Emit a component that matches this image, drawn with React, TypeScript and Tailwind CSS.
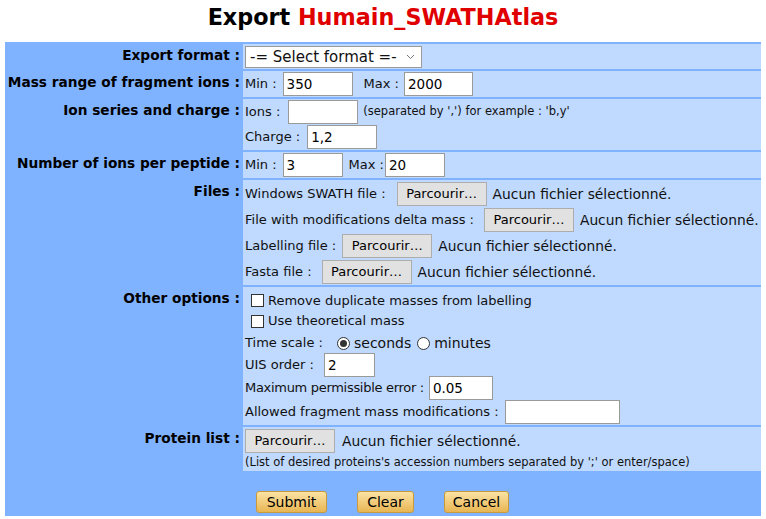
import React from 'react';

const cell = 'bg-[#bfd9ff] px-[2px]';
const label = 'pt-[1px] pr-[1px] text-right font-bold leading-[20px] text-[13.7px] text-black whitespace-nowrap';

function TextBox({ w, value = '' }: { w: string; value?: string }) {
    return (
        <input
            readOnly
            value={value}
            className={`${w} h-[24px] border border-[#9a9a9a] bg-white px-[3px] text-[13.5px] text-black outline-none font-['DejaVu_Sans',Verdana,sans-serif]`}
        />
    );
}

function Browse({ w = 'w-[90px]' }: { w?: string }) {
    return (
        <button className={`${w} h-[24px] border border-[#adadad] bg-[#e1e1e1] text-[13px] text-black font-['DejaVu_Sans',Verdana,sans-serif]`}>
            Parcourir…
        </button>
    );
}

function FileLine({ text, gap }: { text: string; gap: string }) {
    return (
        <div className="flex h-[26px] items-center whitespace-nowrap">
            <span className={gap}>{text}</span>
            <Browse />
            <span className="ml-[6px] text-[13.8px]">Aucun fichier sélectionné.</span>
        </div>
    );
}

function Check({ text }: { text: string }) {
    return (
        <div className="flex items-center">
            <span className="ml-[6px] mr-[4px] inline-block h-[13px] w-[13px] border border-[#333] bg-white" />
            <span>{text}</span>
        </div>
    );
}

function Radio({ on }: { on?: boolean }) {
    return (
        <span className="inline-flex h-[13px] w-[13px] items-center justify-center rounded-full border border-[#333] bg-white">
            {on && <span className="h-[7px] w-[7px] rounded-full bg-[#333]" />}
        </span>
    );
}

function GoldButton({ text, w }: { text: string; w: string }) {
    return (
        <button className={`${w} h-[22px] rounded-[3px] border border-[#c99a3c] bg-gradient-to-b from-[#fbe3a3] to-[#e8b551] text-[14px] leading-[20px] text-black`}>
            {text}
        </button>
    );
}

export default function App() {
    return (
        <div className="w-[766px] h-[519px] bg-white font-['DejaVu_Sans',Verdana,sans-serif] text-[13px] text-[#111]">
            <div className="flex h-[42px] items-center justify-center pb-[6px] text-[22.3px] font-bold">
                <span className="text-black">Export&nbsp;</span>
                <span className="text-[#e00000]">Humain_SWATHAtlas</span>
            </div>

            <div className="mx-[5px] grid w-[756px] grid-cols-[234px_1fr] gap-[2px] bg-[#80b3ff] p-[2px]">
                {/* export format */}
                <div className={label}>Export format :</div>
                <div className={`${cell} flex h-[25px] items-center`}>
                    <div className="flex h-[22px] w-[177px] items-center justify-between border border-[#9a9a9a] bg-white pl-[4px] pr-[6px]">
                        <span className="text-[15px] leading-[20px]">-= Select format =-</span>
                        <svg width="9" height="6" viewBox="0 0 9 6" className="mt-[1px]">
                            <polyline points="1,1 4.5,4.5 8,1" fill="none" stroke="#777" strokeWidth="1" />
                        </svg>
                    </div>
                </div>

                {/* mass range */}
                <div className={label}>Mass range of fragment ions :</div>
                <div className={`${cell} flex h-[26px] items-center`}>
                    <span className="mr-[6px]">Min :</span>
                    <TextBox w="w-[70px]" value="350" />
                    <span className="ml-[11px] mr-[5px]">Max :</span>
                    <TextBox w="w-[69px]" value="2000" />
                </div>

                {/* ion series */}
                <div className={label}>Ion series and charge :</div>
                <div className={`${cell} flex flex-col py-[1px]`}>
                    <div className="flex h-[24px] items-center">
                        <span className="mr-[8px]">Ions :</span>
                        <TextBox w="w-[70px]" />
                        <span className="ml-[5px] text-[11.5px]">(separated by ',') for example : 'b,y'</span>
                    </div>
                    <div className="mt-[1px] flex h-[24px] items-center">
                        <span className="mr-[7px]">Charge :</span>
                        <TextBox w="w-[70px]" value="1,2" />
                    </div>
                </div>

                {/* ions per peptide */}
                <div className={label}>Number of ions per peptide :</div>
                <div className={`${cell} flex h-[26px] items-center`}>
                    <span className="mr-[6px]">Min :</span>
                    <TextBox w="w-[60px]" value="3" />
                    <span className="ml-[6px] mr-[1px]">Max :</span>
                    <TextBox w="w-[60px]" value="20" />
                </div>

                {/* files */}
                <div className={label}>Files :</div>
                <div className={`${cell} flex flex-col pt-[1px]`}>
                    <FileLine text="Windows SWATH file :" gap="mr-[11px]" />
                    <FileLine text="File with modifications delta mass :" gap="mr-[10px]" />
                    <FileLine text="Labelling file :" gap="mr-[6px]" />
                    <FileLine text="Fasta file :" gap="mr-[10px]" />
                </div>

                {/* other options */}
                <div className={label}>Other options :</div>
                <div className={`${cell} flex flex-col pt-[3px] pb-[1px]`}>
                    <div className="flex h-[21px] items-center">
                        <Check text="Remove duplicate masses from labelling" />
                    </div>
                    <div className="flex h-[20px] items-center">
                        <Check text="Use theoretical mass" />
                    </div>
                    <div className="flex h-[22px] items-center pt-[2px]">
                        <span className="mr-[14px]">Time scale :</span>
                        <Radio on />
                        <span className="ml-[4px] mr-[6px] text-[14px]">seconds</span>
                        <Radio />
                        <span className="ml-[4px] text-[14px]">minutes</span>
                    </div>
                    <div className="flex h-[23px] items-center">
                        <span className="mr-[10px]">UIS order :</span>
                        <TextBox w="w-[51px]" value="2" />
                    </div>
                    <div className="flex h-[24px] items-center">
                        <span className="mr-[5px] tracking-[-0.3px]">Maximum permissible error :</span>
                        <TextBox w="w-[64px]" value="0.05" />
                    </div>
                    <div className="flex h-[24px] items-center">
                        <span className="mr-[6px]">Allowed fragment mass modifications :</span>
                        <TextBox w="w-[115px]" />
                    </div>
                </div>

                {/* protein list */}
                <div className={label}>Protein list :</div>
                <div className={`${cell} flex flex-col pt-[2px] pb-[2px]`}>
                    <div className="flex h-[24px] items-center">
                        <Browse />
                        <span className="ml-[7px] text-[13.8px]">Aucun fichier sélectionné.</span>
                    </div>
                    <div className="mt-[2px] text-[11.5px] leading-[14px] whitespace-nowrap">
                        (List of desired proteins's accession numbers separated by ';' or enter/space)
                    </div>
                </div>

                {/* buttons */}
                <div />
                <div className="flex h-[41px] items-end gap-[30px] pl-[13px] pb-[1px]">
                    <GoldButton text="Submit" w="w-[71px]" />
                    <GoldButton text="Clear" w="w-[57px]" />
                    <GoldButton text="Cancel" w="w-[65px]" />
                </div>
            </div>
        </div>
    );
}
